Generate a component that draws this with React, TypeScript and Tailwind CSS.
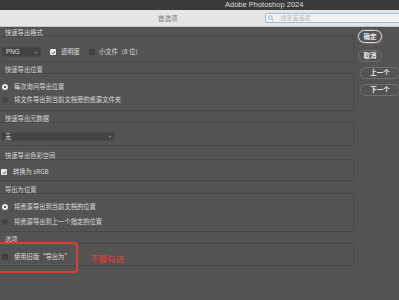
import React from "react";

const font = { fontFamily: '"Noto Sans CJK SC", "Noto Sans", sans-serif' };

function Check({ on }: { on: boolean }) {
  return on ? (
    <span className="w-[6px] h-[6px] rounded-[1px] bg-[#e8e8e8] flex items-center justify-center shrink-0">
      <svg width="5" height="5" viewBox="0 0 10 10">
        <path d="M2 5.2 L4.2 7.4 L8.2 2.6" fill="none" stroke="#333" strokeWidth="1.8" />
      </svg>
    </span>
  ) : (
    <span className="w-[6px] h-[6px] rounded-[1px] bg-[#424242] border border-[#3c3c3c] shrink-0" />
  );
}

function Radio({ on }: { on: boolean }) {
  return on ? (
    <span className="w-[6px] h-[6px] rounded-full bg-[#e8e8e8] flex items-center justify-center shrink-0">
      <span className="w-[2px] h-[2px] rounded-full bg-[#3a3a3a]" />
    </span>
  ) : (
    <span className="w-[6px] h-[6px] rounded-full bg-[#444444] border border-[#3f3f3f] shrink-0" />
  );
}

function Chevron() {
  return (
    <svg width="4" height="3" viewBox="0 0 8 6">
      <path d="M1 1.5 L4 4.5 L7 1.5" fill="none" stroke="#b8b8b8" strokeWidth="1.3" />
    </svg>
  );
}

function Header({ text, mt }: { text: string; mt: string }) {
  return (
    <div className={`${mt} h-[7px] leading-[7px] pl-[8px] text-[6.3px] text-[#d6d6d6] whitespace-nowrap`}>{text}</div>
  );
}

const box = "border border-[#474747] shadow-[inset_0_0_0_0.5px_#5a5a5a]";

export default function App() {
  return (
    <div className="w-[399px] h-[300px] overflow-hidden bg-[#535353] relative whitespace-nowrap" style={font}>
      <div className="h-[10px] bg-[#3a3a3a] flex items-center">
        <span className="ml-[225px] shrink-0 text-[7.5px] leading-[10px] text-[#dcdcdc]" style={{ fontFamily: '"Liberation Sans", Arial, sans-serif' }}>
          Adobe Photoshop 2024
        </span>
      </div>
      <div className="h-[17px] bg-[#e6e6e6] border-b border-[#c4c4c4] flex items-center">
        <span className="ml-[158px] shrink-0 text-[6.5px] leading-[8px] text-[#7a7a7a]">首选项</span>
        <div className="ml-[87px] shrink-0 h-[10px] w-[140px] border border-[#a6bcd2] rounded-[2px] bg-[#f1f1f1] flex items-center">
          <svg width="6" height="6" viewBox="0 0 12 12" className="ml-[2px] shrink-0">
            <circle cx="5" cy="5" r="3.6" fill="none" stroke="#8296aa" strokeWidth="1.3" />
            <path d="M7.7 7.7 L10.8 10.8" stroke="#8296aa" strokeWidth="1.4" />
          </svg>
          <span className="ml-[7px] text-[6px] text-[#b9b9b9] leading-[8px]">搜索首选项</span>
        </div>
      </div>

      <div className="flex">
        <div className="ml-[-3px] w-[357px] shrink-0 text-[6.3px] text-[#dedede]">
          <Header text="快速导出格式" mt="mt-[2px]" />
          <div className={`${box} h-[26px] pt-[10px] pl-[3px] flex items-start`}>
            <div className="w-[40px] h-[10px] bg-[#434343] border border-[#4a4a4a] rounded-[1px] flex items-center justify-between pl-[4px] pr-[2px]">
              <span className="leading-[8px]" style={{ fontFamily: '"Liberation Sans", Arial, sans-serif' }}>PNG</span>
              <Chevron />
            </div>
            <div className="ml-[9px] h-[10px] flex items-center gap-[5px]">
              <Check on />
              <span>透明度</span>
            </div>
            <div className="ml-[9px] h-[10px] flex items-center gap-[4px]">
              <Check on={false} />
              <span>小文件（8 位）</span>
            </div>
          </div>

          <Header text="快速导出位置" mt="mt-[4px]" />
          <div className={`${box} h-[38px] pt-[7px] pl-[4px]`}>
            <div className="h-[12px] flex items-center gap-[6px]">
              <Radio on />
              <span>每次询问导出位置</span>
            </div>
            <div className="h-[12px] mt-[1px] flex items-center gap-[6px]">
              <Radio on={false} />
              <span>将文件导出到当前文档旁的资源文件夹</span>
            </div>
          </div>

          <Header text="快速导出元数据" mt="mt-[4px]" />
          <div className={`${box} h-[24px] pt-[9px] pl-[3px]`}>
            <div className="w-[114px] h-[9px] bg-[#434343] border border-[#4a4a4a] rounded-[1px] flex items-center justify-between pl-[3px] pr-[2px]">
              <span className="leading-[8px]">无</span>
              <Chevron />
            </div>
          </div>

          <Header text="快速导出色彩空间" mt="mt-[6px]" />
          <div className={`${box} h-[22px] pt-[7px] pl-[3px]`}>
            <div className="h-[10px] flex items-center gap-[6px]">
              <Check on />
              <span>转换为 sRGB</span>
            </div>
          </div>

          <Header text="导出为位置" mt="mt-[5px]" />
          <div className={`${box} h-[39px] pt-[7px] pl-[4px]`}>
            <div className="h-[12px] flex items-center gap-[6px]">
              <Radio on />
              <span>将资源导出到当前文档的位置</span>
            </div>
            <div className="h-[12px] mt-[3px] flex items-center gap-[6px]">
              <Radio on={false} />
              <span>将资源导出到上一个指定的位置</span>
            </div>
          </div>

          <Header text="选项" mt="mt-[4px]" />
          <div className={`${box} h-[23px] pt-[8px] pl-[4px]`}>
            <div className="h-[10px] flex items-center gap-[6px]">
              <Check on={false} />
              <span>使用旧版“导出为”</span>
            </div>
          </div>
        </div>

        <div className="flex flex-col text-[6.5px] font-semibold text-[#ececec]">
          <div className="ml-[4px] mt-[3px] w-[24px] h-[13px] rounded-full border border-[#d8d8d8] shadow-[0_0_0_0.5px_#8a8a8a] flex items-center justify-center">确定</div>
          <div className="ml-[4px] mt-[7px] w-[24px] h-[12px] rounded-full border border-[#707070] flex items-center justify-center">取消</div>
          <div className="ml-[6px] mt-[5px] w-[40px] h-[12px] rounded-full border border-[#707070] flex items-center justify-center">上一个</div>
          <div className="ml-[6px] mt-[5px] w-[40px] h-[12px] rounded-full border border-[#707070] flex items-center justify-center">下一个</div>
        </div>
      </div>

      <div className="absolute left-[-4px] top-[242px] w-[82px] h-[31px] border-2 border-[#d6402e] rounded-[3px]" />
      <div className="absolute left-[90px] top-[252px] text-[8.5px] leading-[12px] text-[#e0452f]">不要勾选</div>
    </div>
  );
}
